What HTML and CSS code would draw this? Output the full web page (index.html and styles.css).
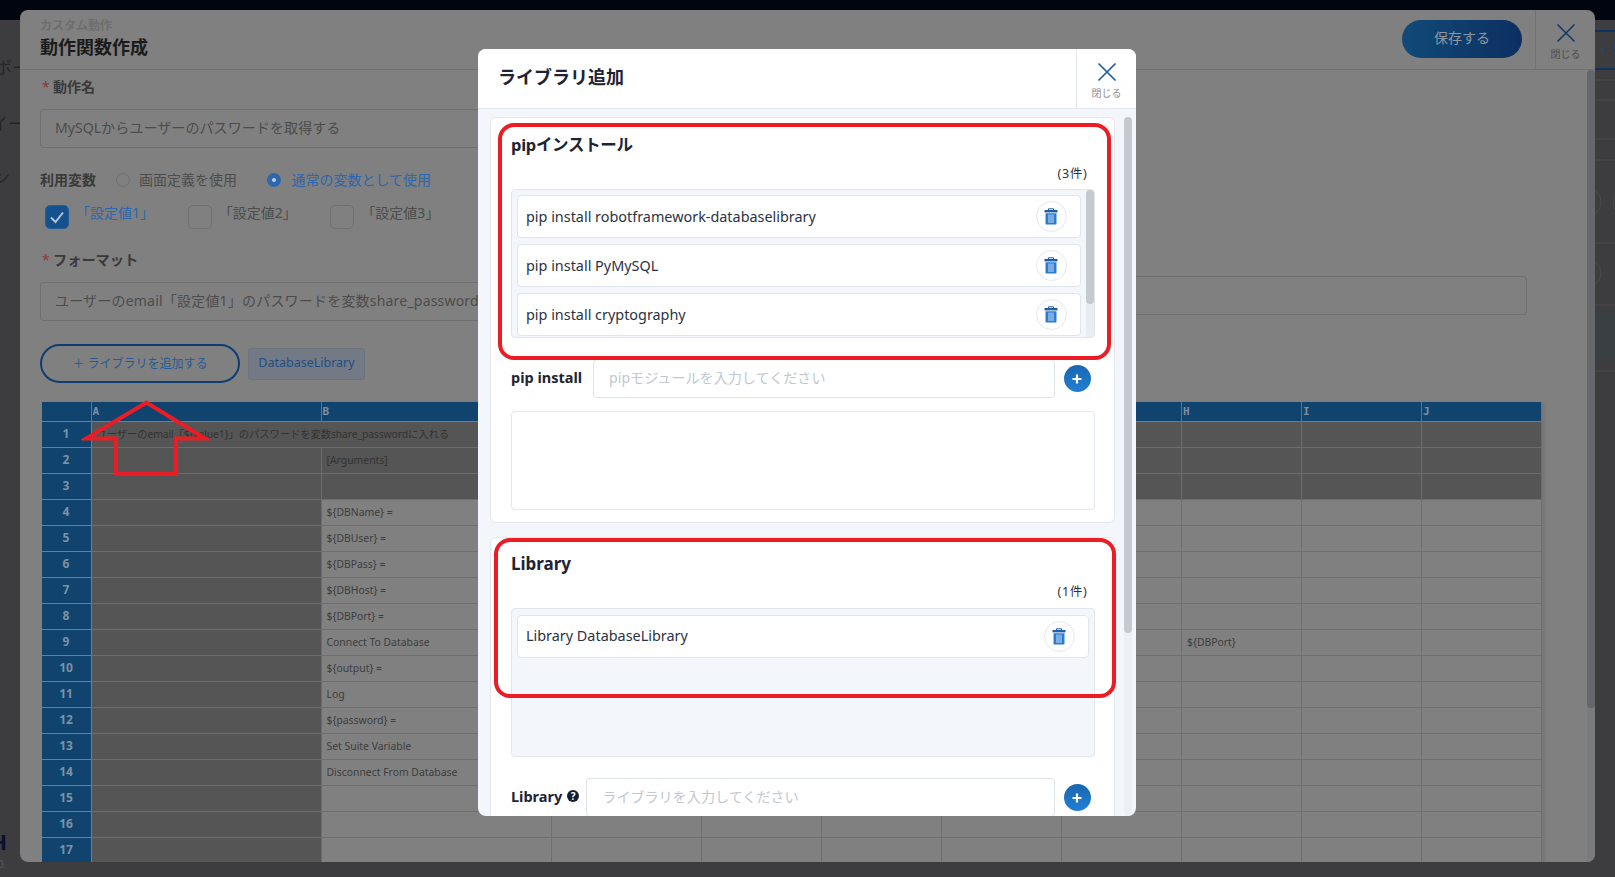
FILE: index.html
```html
<!DOCTYPE html>
<html lang="ja">
<head>
<meta charset="utf-8">
<title>ライブラリ追加</title>
<link rel="stylesheet" href="styles.css">
</head>
<body>
<div class="app">
  <div class="topbar"></div>
  <div class="app-row">
    <aside class="side">
      <div class="side-item item-a">ボード</div>
      <div class="side-item item-b">スイート</div>
      <div class="side-item item-c">デザイン</div>
      <div class="side-logo">H</div>
      <div class="side-copy">O.</div>
    </aside>
    <main class="app-main"></main>
    <aside class="strip">
      <div class="strip-btn">+ 新規</div>
      <svg class="strip-art" width="20" height="350" viewBox="0 0 20 350">
        <path d="M0 10H20M0 30H20M0 69H20M0 90H20M0 173H20M0 235H20M0 301H20" stroke="#4b4b4d" fill="none"/>
        <circle cx="-8" cy="132" r="14" fill="none" stroke="#4a4a4c"/>
        <circle cx="32" cy="132" r="14" fill="none" stroke="#4a4a4c"/>
        <circle cx="-8" cy="203" r="14" fill="none" stroke="#4a4a4c"/>
        <rect x="0" y="242" width="20" height="48" fill="#3a3f43"/>
      </svg>
    </aside>
  </div>
</div>

<section class="panel">
  <header class="panel-head">
    <div class="panel-titles">
      <div class="panel-sub">カスタム動作</div>
      <div class="panel-title">動作関数作成</div>
    </div>
    <button class="save-btn">保存する</button>
    <div class="panel-close">
      <svg width="20" height="20" viewBox="0 0 20 20"><path d="M1.5 1.5L18.5 18.5M18.5 1.5L1.5 18.5" stroke="#12396c" stroke-width="1.6" fill="none"/></svg>
      <span>閉じる</span>
    </div>
  </header>
  <div class="panel-body">
    <div class="panel-content">
      <div class="field-label label-first"><span class="req">*</span>動作名</div>
      <div class="text-input input-name">MySQLからユーザーのパスワードを取得する</div>

      <div class="radio-row">
        <span class="radio-title">利用変数</span>
        <span class="radio"></span><span class="radio-text">画面定義を使用</span>
        <span class="radio on"></span><span class="radio-text on">通常の変数として使用</span>
      </div>

      <div class="check-row">
        <div class="check-item"><span class="check on"><svg width="16" height="14" viewBox="0 0 16 14"><path d="M2 7.5L6.5 12L14 2.5" stroke="#b8c4d0" stroke-width="2" fill="none"/></svg></span><span class="check-text on">「設定値1」</span></div>
        <div class="check-item"><span class="check"></span><span class="check-text">「設定値2」</span></div>
        <div class="check-item"><span class="check"></span><span class="check-text">「設定値3」</span></div>
      </div>

      <div class="field-label label-format"><span class="req">*</span>フォーマット</div>
      <div class="format-row">
        <div class="text-input input-format">ユーザーのemail「設定値1」のパスワードを変数share_passwordに入れる</div>
        <div class="format-tail"></div>
      </div>

      <div class="lib-row">
        <button class="add-lib"><span class="add-plus">＋</span>ライブラリを追加する</button>
        <span class="lib-tag">DatabaseLibrary</span>
      </div>

      <table class="sheet">
        <colgroup><col class="c-n"><col class="c-a"><col class="c-b"><col class="c-c"><col class="c-d"><col class="c-d"><col class="c-d"><col class="c-d"><col class="c-d"><col class="c-d"><col class="c-d"></colgroup>
        <thead><tr><th></th><th>A</th><th>B</th><th>C</th><th>D</th><th>E</th><th>F</th><th>G</th><th>H</th><th>I</th><th>J</th></tr></thead>
        <tbody>
          <tr class="dark"><th>1</th><td colspan="7" class="merged">ユーザーのemail「${value1}」のパスワードを変数share_passwordに入れる</td><td></td><td></td><td></td></tr>
          <tr class="dark"><th>2</th><td></td><td>[Arguments]</td><td></td><td></td><td></td><td></td><td></td><td></td><td></td><td></td></tr>
          <tr class="dark"><th>3</th><td></td><td></td><td></td><td></td><td></td><td></td><td></td><td></td><td></td><td></td></tr>
          <tr><th>4</th><td class="dark-cell"></td><td>${DBName} =</td><td></td><td></td><td></td><td></td><td></td><td></td><td></td><td></td></tr>
          <tr><th>5</th><td class="dark-cell"></td><td>${DBUser} =</td><td></td><td></td><td></td><td></td><td></td><td></td><td></td><td></td></tr>
          <tr><th>6</th><td class="dark-cell"></td><td>${DBPass} =</td><td></td><td></td><td></td><td></td><td></td><td></td><td></td><td></td></tr>
          <tr><th>7</th><td class="dark-cell"></td><td>${DBHost} =</td><td></td><td></td><td></td><td></td><td></td><td></td><td></td><td></td></tr>
          <tr><th>8</th><td class="dark-cell"></td><td>${DBPort} =</td><td></td><td></td><td></td><td></td><td></td><td></td><td></td><td></td></tr>
          <tr><th>9</th><td class="dark-cell"></td><td>Connect To Database</td><td></td><td></td><td></td><td></td><td></td><td>${DBPort}</td><td></td><td></td></tr>
          <tr><th>10</th><td class="dark-cell"></td><td>${output} =</td><td></td><td></td><td></td><td></td><td></td><td></td><td></td><td></td></tr>
          <tr><th>11</th><td class="dark-cell"></td><td>Log</td><td></td><td></td><td></td><td></td><td></td><td></td><td></td><td></td></tr>
          <tr><th>12</th><td class="dark-cell"></td><td>${password} =</td><td></td><td></td><td></td><td></td><td></td><td></td><td></td><td></td></tr>
          <tr><th>13</th><td class="dark-cell"></td><td>Set Suite Variable</td><td></td><td></td><td></td><td></td><td></td><td></td><td></td><td></td></tr>
          <tr><th>14</th><td class="dark-cell"></td><td>Disconnect From Database</td><td></td><td></td><td></td><td></td><td></td><td></td><td></td><td></td></tr>
          <tr><th>15</th><td class="dark-cell"></td><td></td><td></td><td></td><td></td><td></td><td></td><td></td><td></td><td></td></tr>
          <tr><th>16</th><td class="dark-cell"></td><td></td><td></td><td></td><td></td><td></td><td></td><td></td><td></td><td></td></tr>
          <tr><th>17</th><td class="dark-cell"></td><td></td><td></td><td></td><td></td><td></td><td></td><td></td><td></td><td></td></tr>
        </tbody>
      </table>
    </div>
    <div class="panel-scroll"><div class="panel-thumb"></div></div>
  </div>
</section>

<section class="dialog">
  <header class="dialog-head">
    <h1 class="dialog-title">ライブラリ追加</h1>
    <div class="dialog-close">
      <svg width="20" height="20" viewBox="0 0 20 20"><path d="M1.5 1.5L18.5 18.5M18.5 1.5L1.5 18.5" stroke="#1c5ba6" stroke-width="1.7" fill="none"/></svg>
      <span>閉じる</span>
    </div>
  </header>
  <div class="dialog-body">
    <div class="dialog-content">
      <div class="card">
        <h2 class="card-title title-pip">pipインストール</h2>
        <div class="count">(3件)</div>
        <div class="list">
          <div class="list-items">
            <div class="list-item"><span>pip install robotframework-databaselibrary</span><button class="trash"><svg width="14" height="17" viewBox="0 0 14 17"><path d="M4.5 2V0.8h5V2" stroke="#1c5fa8" fill="none"/><rect x="0.5" y="2" width="13" height="2.4" fill="#1c5fa8"/><path d="M1.5 5.2h11V15.4a1.2 1.2 0 0 1-1.2 1.2H2.7a1.2 1.2 0 0 1-1.2-1.2Z" fill="#2b7cd0"/><path d="M5 6.5V15M7 6.5V15M9 6.5V15" stroke="#d9e8f7" stroke-width=".9"/></svg></button></div>
            <div class="list-item"><span>pip install PyMySQL</span><button class="trash"><svg width="14" height="17" viewBox="0 0 14 17"><path d="M4.5 2V0.8h5V2" stroke="#1c5fa8" fill="none"/><rect x="0.5" y="2" width="13" height="2.4" fill="#1c5fa8"/><path d="M1.5 5.2h11V15.4a1.2 1.2 0 0 1-1.2 1.2H2.7a1.2 1.2 0 0 1-1.2-1.2Z" fill="#2b7cd0"/><path d="M5 6.5V15M7 6.5V15M9 6.5V15" stroke="#d9e8f7" stroke-width=".9"/></svg></button></div>
            <div class="list-item"><span>pip install cryptography</span><button class="trash"><svg width="14" height="17" viewBox="0 0 14 17"><path d="M4.5 2V0.8h5V2" stroke="#1c5fa8" fill="none"/><rect x="0.5" y="2" width="13" height="2.4" fill="#1c5fa8"/><path d="M1.5 5.2h11V15.4a1.2 1.2 0 0 1-1.2 1.2H2.7a1.2 1.2 0 0 1-1.2-1.2Z" fill="#2b7cd0"/><path d="M5 6.5V15M7 6.5V15M9 6.5V15" stroke="#d9e8f7" stroke-width=".9"/></svg></button></div>
          </div>
          <div class="list-scroll"><div class="list-thumb"></div></div>
        </div>
        <div class="entry-row">
          <span class="entry-label">pip install</span>
          <div class="entry-input">pipモジュールを入力してください</div>
          <button class="plus"><svg width="12" height="12" viewBox="0 0 12 12"><path d="M6 1.5V10.5M1.5 6H10.5" stroke="#fff" stroke-width="2.2"/></svg></button>
        </div>
        <div class="textarea"></div>
      </div>

      <div class="card card-lib">
        <h2 class="card-title">Library</h2>
        <div class="count">(1件)</div>
        <div class="list">
          <div class="list-items">
            <div class="list-item"><span>Library DatabaseLibrary</span><button class="trash"><svg width="14" height="17" viewBox="0 0 14 17"><path d="M4.5 2V0.8h5V2" stroke="#1c5fa8" fill="none"/><rect x="0.5" y="2" width="13" height="2.4" fill="#1c5fa8"/><path d="M1.5 5.2h11V15.4a1.2 1.2 0 0 1-1.2 1.2H2.7a1.2 1.2 0 0 1-1.2-1.2Z" fill="#2b7cd0"/><path d="M5 6.5V15M7 6.5V15M9 6.5V15" stroke="#d9e8f7" stroke-width=".9"/></svg></button></div>
          </div>
        </div>
        <div class="entry-row">
          <span class="entry-label">Library<span class="help">?</span></span>
          <div class="entry-input">ライブラリを入力してください</div>
          <button class="plus"><svg width="12" height="12" viewBox="0 0 12 12"><path d="M6 1.5V10.5M1.5 6H10.5" stroke="#fff" stroke-width="2.2"/></svg></button>
        </div>
      </div>
    </div>
    <div class="dialog-scroll"><div class="dialog-thumb"></div></div>
  </div>
</section>

<div class="mark mark-pip"></div>
<div class="mark mark-lib"></div>
<svg class="mark-arrow" width="132" height="80" viewBox="0 0 132 80">
  <path d="M65.5 2.5L5 38.5H35V74H95V38.5H124Z" fill="none" stroke="#ed1c24" stroke-width="4" stroke-linejoin="miter"/>
</svg>
</body>
</html>
```

FILE: styles.css
```css
* { box-sizing: border-box; }
html, body { margin: 0; padding: 0; }
body {
  position: relative;
  width: 1615px;
  height: 877px;
  overflow: hidden;
  background: #3d3d3f;
  font-family: "Noto Sans", "Noto Sans CJK JP", sans-serif;
  color: #222;
}
button { font-family: inherit; padding: 0; cursor: pointer; }
h1, h2 { margin: 0; }

/* app behind the windows */
.app { display: flex; flex-direction: column; height: 100%; }
.topbar { height: 20px; background: #00050f; flex: none; }
.app-row { display: flex; flex: 1; min-height: 0; }
.app-main { flex: 1; }
.side { width: 20px; flex: none; overflow: hidden; display: flex; flex-direction: column; }
.side-item {
  display: flex; justify-content: flex-end; white-space: nowrap;
  height: 24px; line-height: 24px; font-size: 17px; color: #262628;
}
.item-a { margin-top: 36px; margin-right: -26px; }
.item-b { margin-top: 32px; margin-right: -22px; }
.item-c { margin-top: 30px; margin-right: 10px; }
.side-logo {
  margin-top: 635px; display: flex; justify-content: flex-end; padding-right: 13px;
  height: 32px; line-height: 32px; font-size: 22px; font-weight: 700; color: #0b1030;
}
.side-copy { display: flex; justify-content: flex-end; padding-right: 14px; height: 14px; line-height: 14px; font-size: 10px; color: #555; }
.strip { width: 20px; flex: none; overflow: hidden; padding-top: 10px; }
.strip-btn {
  height: 40px; line-height: 36px; white-space: nowrap; padding-left: 4px;
  font-size: 16px; color: #1a4474; border-top: 2px solid #0f3260; border-bottom: 2px solid #0f3260;
}
.strip-art { display: block; }

/* dimmed editor window */
.panel {
  position: absolute; left: 20px; top: 10px; width: 1575px; height: 852px;
  display: flex; flex-direction: column;
  background: #808080; border-radius: 8px; overflow: hidden;
}
.panel-head {
  height: 60px; flex: none; display: flex; align-items: stretch;
  border-bottom: 1px solid #717171;
}
.panel-titles { flex: 1; padding: 7px 0 0 20px; }
.panel-sub { font-size: 12px; line-height: 18px; font-weight: 700; color: #6e6e6e; }
.panel-title { font-size: 18px; line-height: 24px; font-weight: 700; color: #1b1b1b; }
.save-btn {
  width: 120px; height: 38px; margin: 10px 13px 0 0; padding-bottom: 4px; border: 0; border-radius: 19px;
  background: linear-gradient(90deg, #114a78, #0c2f60);
  color: #8d97a2; font-size: 14px;
}
.panel-close {
  width: 60px; border-left: 1px solid #727272; display: flex; flex-direction: column; align-items: center;
  padding-top: 13px; color: #4d4d4d; font-size: 10px; line-height: 14px;
}
.panel-close svg { display: block; margin-bottom: 4px; }
.panel-body { flex: 1; min-height: 0; display: flex; }
.panel-content { flex: 1; min-width: 0; padding: 0 60px 0 20px; }
.panel-scroll { width: 8px; flex: none; background: #7a7b7c; }
.panel-thumb { height: 638px; background: #66676b; border-radius: 4px; }

.field-label { height: 20px; line-height: 18px; font-size: 14px; font-weight: 700; color: #3a3a3a; }
.label-first { margin-top: 8px; }
.label-format { margin-top: 22px; font-size: 14.2px; line-height: 18px; }
.req { display: inline-block; width: 12px; margin-left: 2px; margin-right: -1px; color: #8b3a3a; font-weight: 400; }
.text-input {
  height: 39px; margin-top: 11px; padding: 0 14px; line-height: 35px; font-size: 14.1px; white-space: nowrap; overflow: hidden;
  border: 1px solid #707074; border-radius: 4px; color: #4c4c4c;
}
.input-name { width: 900px; }
.format-row { display: flex; align-items: flex-start; margin-top: 11px; }
.input-format { margin-top: 0; width: 1080px; flex: none; border-right: 0; border-radius: 4px 0 0 4px; font-size: 14px; letter-spacing: .2px; }
.format-tail {
  flex: 1; height: 39px; margin-top: -6px;
  border: 1px solid #707074; border-left: 0; border-radius: 0 4px 4px 0;
}
.radio-row { display: flex; align-items: center; height: 20px; margin-top: 22px; font-size: 14px; color: #4c4c4c; }
.radio-title { width: 76px; font-weight: 700; color: #3a3a3a; padding-bottom: 2px; }
.radio { width: 14px; height: 14px; margin-left: -0.5px; border-radius: 50%; border: 1px solid #727272; flex: none; }
.radio.on { border: 5px solid #2d67ad; background: #c4d0dc; }
.radio-text { margin-left: 9.5px; width: 128px; white-space: nowrap; padding-bottom: 2px; }
.radio-text.on { margin-left: 11px; color: #2d67ad; }
.check-row { display: flex; height: 24px; margin-top: 15px; padding-left: 5px; }
.check-item { display: flex; width: 142.7px; }
.check { width: 24px; height: 24px; border: 1px solid #717171; border-radius: 5px; flex: none; display: flex; align-items: center; justify-content: center; }
.check.on { background: #14528f; border-color: #2a5f94; }
.check-text { margin-left: 7px; font-size: 14px; line-height: 16px; color: #4c4c4c; }
.check-text.on { color: #2d67ad; }
.lib-row { display: flex; align-items: center; height: 39px; margin-top: 23px; }
.add-lib {
  width: 200px; height: 39px; padding-bottom: 2px; border: 2px solid #0f3d73; border-radius: 20px; background: transparent;
  font-size: 12px; color: #245b96;
}
.add-plus { margin-right: 3px; font-weight: 400; }
.lib-tag {
  margin-left: 8px; width: 117px; height: 32px; line-height: 28px; text-align: center; font-size: 12.5px;
  background: #737a85; border: 1px solid #6d7480; border-radius: 3px; color: #1f4f86;
}
.sheet {
  display: table; table-layout: fixed; width: 1500.5px; margin: 19px 0 0 1.5px;
  border-collapse: separate; border-spacing: 0; box-shadow: 4px 0 3px -1px #767676;
  font-size: 10.4px; color: #3d3d3d;
}
.c-n { width: 50px; } .c-a { width: 230px; } .c-b { width: 230.5px; } .c-c { width: 150px; } .c-d { width: 120px; }
.sheet thead th {
  height: 20px; padding: 0 0 0 1px; text-align: left; background: #10446e; color: #7d8ea0;
  font: 700 11px/14px "DejaVu Sans Mono", monospace; border-right: 1px solid #5f7585; border-bottom: 1px solid #6f7d86;
}
.sheet tbody th {
  height: 26px; padding: 0 0 2px; text-align: center; background: #10446e; color: #7c91a3;
  font-size: 12px; font-weight: 700; border-right: 1px solid #6f7d86; border-bottom: 1px solid #6f7d86;
}
.sheet td {
  height: 26px; padding: 0 0 2px 5px; white-space: nowrap; overflow: hidden;
  border-right: 1px solid #6f6f6f; border-bottom: 1px solid #6f6f6f;
}
.sheet .merged { letter-spacing: -.14px; }
.sheet .dark td, .sheet .dark-cell { background: #555; border-color: #6c6c6c; color: #333; }

/* library dialog */
.dialog {
  position: absolute; left: 478px; top: 49px; width: 658px; height: 767px;
  display: flex; flex-direction: column; background: #f3f6fb; border-radius: 8px; overflow: hidden;
}
.dialog-head { height: 60px; flex: none; display: flex; background: #fff; border-bottom: 1px solid #e3e8f0; }
.dialog-title { flex: 1; padding-left: 20px; font-size: 18px; line-height: 57px; font-weight: 700; color: #1d2433; }
.dialog-close {
  width: 60px; border-left: 1px solid #e3e8f0; display: flex; flex-direction: column; align-items: center;
  padding-top: 13px; color: #8a8f98; font-size: 10px; line-height: 14px;
}
.dialog-close svg { display: block; margin-bottom: 4px; }
.dialog-body { flex: 1; min-height: 0; display: flex; padding-top: 8px; }
.dialog-content { flex: 1; min-width: 0; padding: 0 9px 0 12px; overflow: hidden; }
.dialog-scroll { width: 8px; flex: none; margin-right: 4px; background: #ecf0f5; border-radius: 4px; }
.dialog-thumb { height: 516px; background: #c5c9d0; border-radius: 4px; }
.card {
  height: 406px; padding: 16px 19.5px 0 20px; background: #fff; border: 1px solid #e3e8f0; border-radius: 6px;
}
.card-lib { height: 400px; margin-top: 14px; padding-top: 15px; }
.card-title { font-size: 17px; line-height: 22px; font-weight: 700; color: #1d2433; }
.title-pip { font-size: 16.5px; letter-spacing: -.3px; }
.count { margin-top: 9px; padding-right: 7px; height: 18px; line-height: 18px; text-align: right; font-size: 12.5px; letter-spacing: .7px; color: #2b3342; }
.card-lib .count { margin-top: 8px; }
.list {
  display: flex; height: 149px; margin-top: 6px; padding: 5px 0 0 5px; overflow: hidden;
  background: #f3f6fb; border: 1px solid #e0e5ee; border-radius: 4px;
}
.card-lib .list { margin-top: 7px; padding-top: 6px; padding-right: 5px; }
.list-items { flex: 1; min-width: 0; display: flex; flex-direction: column; gap: 6px; }
.list-item {
  flex: none; height: 43px; display: flex; align-items: center; justify-content: space-between;
  padding: 0 13px 0 8px; background: #fff; border: 1px solid #e0e5ee; border-radius: 4px;
  font-size: 14.4px; color: #2b3342;
}
.card-lib .list-item span { margin-bottom: 3px; }
.list-scroll { width: 8px; flex: none; margin-left: 5px; margin-top: -5px; background: #e9edf3; }
.list-thumb { height: 114px; background: #c5c9d0; border-radius: 4px; }
.trash {
  width: 31px; height: 31px; flex: none; display: flex; align-items: center; justify-content: center;
  background: #fff; border: 1px solid #e3e8f0; border-radius: 50%;
}
.entry-row { display: flex; align-items: center; height: 39px; margin-top: 21px; padding-right: 4px; }
.entry-label { display: flex; align-items: center; margin-right: 11px; padding-bottom: 3px; font-size: 14.5px; font-weight: 700; color: #1d2433; white-space: nowrap; }
.help {
  width: 12px; height: 12px; margin-left: 5px; margin-right: -4px; border-radius: 50%; background: #111d30; color: #fff;
  font-size: 10px; line-height: 12px; text-align: center;
}
.entry-input {
  flex: 1; min-width: 0; height: 39px; padding: 0 15px; line-height: 36px; font-size: 14.1px; color: #c2c7d0;
  background: #fff; border: 1px solid #dfe3ea; border-radius: 4px;
}
.plus {
  width: 27px; height: 27px; flex: none; margin-left: 8.5px; display: flex; align-items: center; justify-content: center;
  border: 0; border-radius: 50%; background: linear-gradient(180deg, #1b66b0, #2080d4);
}
.textarea { height: 99px; margin-top: 13px; background: #fff; border: 1px solid #e3e8f0; border-radius: 4px; }

/* red annotations */
.mark { position: absolute; border: 4.5px solid #ed1c24; border-radius: 16px; }
.mark-pip { left: 498px; top: 123px; width: 613px; height: 237px; }
.mark-lib { left: 494px; top: 538px; width: 622px; height: 160px; }
.mark-arrow { position: absolute; left: 81px; top: 400px; }
```
